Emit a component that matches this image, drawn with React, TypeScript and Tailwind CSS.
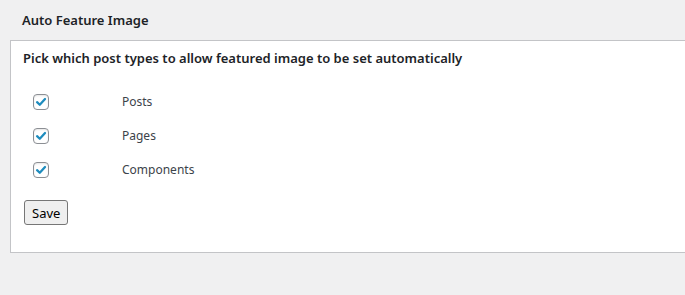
import { useState } from "react"

const types = ["Posts", "Pages", "Components"]

function Check({ checked, onToggle }: { checked: boolean; onToggle: () => void }) {
  return (
    <button
      type="button"
      onClick={onToggle}
      className="flex h-4 w-4 items-center justify-center rounded-[4px] border border-[#8c8f94] bg-white shadow-[inset_0_1px_2px_rgba(0,0,0,0.1)]"
    >
      {checked && (
        <svg width="14" height="14" viewBox="0 0 16 16">
          <path d="M3.5 8.2 L6.6 11.2 L12.6 4.6" fill="none" stroke="#1e8cbe" strokeWidth="2.6" strokeLinecap="round" strokeLinejoin="round" />
        </svg>
      )}
    </button>
  )
}

export default function App() {
  const [checked, setChecked] = useState<Record<string, boolean>>({ Posts: true, Pages: true, Components: true })

  return (
    <div className="h-[295px] w-[685px] overflow-hidden bg-[#f0f0f1] pl-[10px] font-['Noto_Sans',sans-serif] text-[#1d2327]">
      <h2 className="pl-[12px] pt-[10px] text-[13px] font-semibold leading-[20px]">Auto Feature Image</h2>
      <div className="mt-[10px] h-[213px] w-[700px] border border-[#c3c4c7] bg-white pl-[12px]">
        <p className="pt-[7px] text-[13px] font-semibold leading-[20px]">
          Pick which post types to allow featured image to be set automatically
        </p>
        <div className="mt-[26px] flex flex-col gap-[18px]">
          {types.map((t) => (
            <label key={t} className="flex h-4 items-center">
              <span className="ml-[10px] w-[89px]">
                <Check checked={checked[t]} onToggle={() => setChecked({ ...checked, [t]: !checked[t] })} />
              </span>
              <span className="text-[12px] leading-[16px] text-[#3c434a]">{t}</span>
            </label>
          ))}
        </div>
        <button
          type="button"
          className="ml-[1px] mt-[22px] h-[25px] rounded-[3px] border border-[#767676] bg-[#efefef] px-[7px] text-[13px] leading-[20px] text-black"
        >
          Save
        </button>
      </div>
    </div>
  )
}
